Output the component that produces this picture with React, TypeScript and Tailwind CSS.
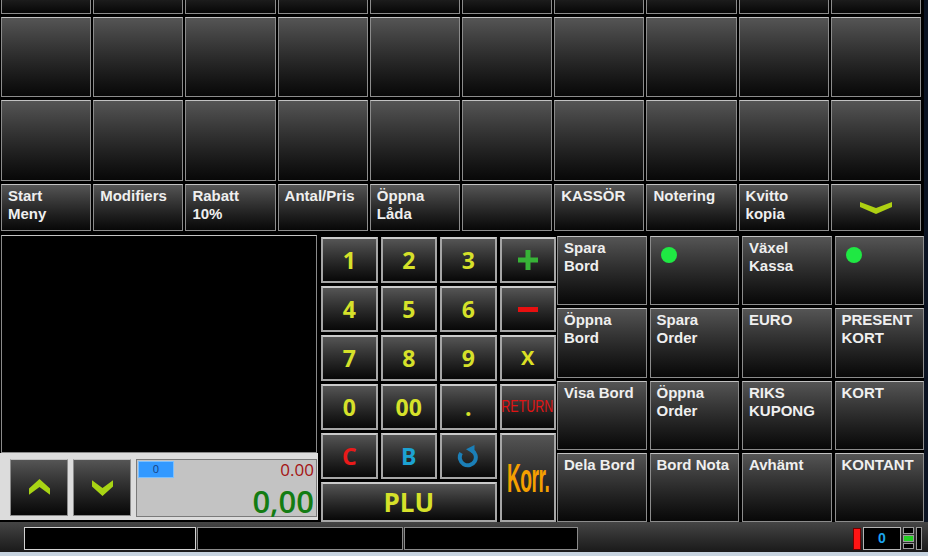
import type { ReactNode } from "react";

const btn =
  "bg-linear-to-b from-[#555555] to-[#080808] border border-[#8c8c8c] border-t-[#c2c2c2]";
const key =
  "bg-linear-to-b from-[#555555] to-[#080808] border-2 border-[#a6a6a6] border-t-[#cacaca] flex items-center justify-center";
const digit = "font-['Open_Sans',sans-serif] font-bold text-[23px] text-[#d6e12a]";

const ChevronDown = ({ w = 32, h = 12 }: { w?: number; h?: number }) => (
  <svg width={w} height={h} viewBox="0 0 32 12">
    <polygon points="0,0 16,6 32,0 32,5 16,12 0,5" fill="#aed012" />
  </svg>
);

const ChevUp = () => (
  <svg width="21" height="17" viewBox="0 0 20 16">
    <polygon points="10,0 20,9 20,15 10,7.5 0,15 0,9" fill="#a8d414" />
  </svg>
);

const ChevDown = () => (
  <svg width="21" height="17" viewBox="0 0 20 16">
    <polygon points="0,1 10,8.5 20,1 20,7 10,16 0,7" fill="#a8d414" />
  </svg>
);

const Label = ({ lines }: { lines: string[] }) => (
  <div className="px-[6px] text-[15px] font-bold leading-[18px] text-[#efefef]">
    {lines.map((l) => (
      <div key={l}>{l}</div>
    ))}
  </div>
);

const topLabels: (string[] | "chev")[] = [
  ["Start", "Meny"],
  ["Modifiers"],
  ["Rabatt", "10%"],
  ["Antal/Pris"],
  ["Öppna", "Låda"],
  [],
  ["KASSÖR"],
  ["Notering"],
  ["Kvitto", "kopia"],
  "chev",
];

const rightCells: (string[] | "dot")[] = [
  ["Spara", "Bord"],
  "dot",
  ["Växel", "Kassa"],
  "dot",
  ["Öppna", "Bord"],
  ["Spara", "Order"],
  ["EURO"],
  ["PRESENT", "KORT"],
  ["Visa Bord"],
  ["Öppna", "Order"],
  ["RIKS", "KUPONG"],
  ["KORT"],
  ["Dela Bord"],
  ["Bord Nota"],
  ["Avhämt"],
  ["KONTANT"],
];

const Refresh = () => (
  <svg width="24" height="24" viewBox="0 0 24 24">
    <path d="M5.07 9 A8 8 0 1 0 15.5 6.2" fill="none" stroke="#1b7fb7" strokeWidth="4" />
    <polygon points="10,5.2 18.5,1 18.5,10.5" fill="#1b7fb7" />
  </svg>
);

const Key = ({ children, className = "" }: { children: ReactNode; className?: string }) => (
  <div className={`${key} ${className}`}>{children}</div>
);

export default function App() {
  return (
    <div className="w-[928px] h-[556px] bg-black flex flex-col overflow-hidden font-['Liberation_Sans',Arial,sans-serif]">
      <div className="flex h-[522px]">
        <div className="w-[924px] flex flex-col">
          {/* product grid + function row */}
          <div className="w-[922px] grid grid-cols-10 grid-rows-[14px_80px_81px_47px] gap-x-[2px] gap-y-[3px] px-[1px]">
            {Array.from({ length: 10 }).map((_, i) => (
              <div
                key={`a${i}`}
                className="bg-linear-to-b from-[#1c1c1c] to-[#070707] border border-t-0 border-[#8c8c8c]"
              />
            ))}
            {Array.from({ length: 20 }).map((_, i) => (
              <div key={`b${i}`} className={btn} />
            ))}
            {topLabels.map((l, i) =>
              l === "chev" ? (
                <div key={`f${i}`} className={`${btn} flex items-center justify-center`}>
                  <ChevronDown />
                </div>
              ) : (
                <div key={`f${i}`} className={`${btn} pt-[2px]`}>
                  <Label lines={l} />
                </div>
              )
            )}
          </div>

          <div className="flex mt-[4px] h-[287px]">
            {/* receipt display + totals */}
            <div className="w-[319px] flex flex-col">
              <div className="ml-[1px] w-[316px] h-[218px] bg-black border border-[#8a8a8a] border-t-[#c4c4c4]" />
              <div className="w-[318px] h-[67px] bg-[#dcdcdc] pl-[10px] pt-[6px] flex gap-[5px] items-start">
                <div className={`${btn} w-[58px] h-[57px] flex items-center justify-center`}>
                  <ChevUp />
                </div>
                <div className={`${btn} w-[58px] h-[57px] flex items-center justify-center`}>
                  <ChevDown />
                </div>
                <div className="w-[181px] h-[58px] bg-[#c3c3c3] border border-[#7a7a7a] flex flex-col font-['Open_Sans',sans-serif]">
                  <div className="flex justify-between items-start h-[18px] mt-[1px]">
                    <div className="ml-[1px] w-[36px] h-[17px] bg-[#3399ff] border border-[#7cc0ff] text-[11px] leading-[14px] text-center text-[#17407f]">
                      0
                    </div>
                    <div className="mr-[2px] text-[17px] leading-[17px] text-[#a31212]">0.00</div>
                  </div>
                  <div className="mt-[9px] mr-[2px] text-right text-[31px] leading-[26px] font-semibold text-[#137c13]">
                    0,00
                  </div>
                </div>
              </div>
            </div>

            {/* keypad */}
            <div className="ml-[2px] mt-[2px] w-[235px] h-[284px] grid grid-cols-4 grid-rows-[46px_46px_46px_46px_46px_40px] gap-[3px]">
              {["1", "2", "3"].map((d) => (
                <Key key={d}><span className={digit}>{d}</span></Key>
              ))}
              <Key>
                <svg width="20" height="20" viewBox="0 0 20 20">
                  <rect x="7.5" y="0" width="5" height="20" fill="#37b337" />
                  <rect x="0" y="7.5" width="20" height="5" fill="#37b337" />
                </svg>
              </Key>
              {["4", "5", "6"].map((d) => (
                <Key key={d}><span className={digit}>{d}</span></Key>
              ))}
              <Key>
                <div className="w-[20px] h-[5px] bg-[#e81010]" />
              </Key>
              {["7", "8", "9"].map((d) => (
                <Key key={d}><span className={digit}>{d}</span></Key>
              ))}
              <Key><span className="font-['Open_Sans',sans-serif] font-bold text-[20px] text-[#dde024]">X</span></Key>
              {["0", "00", "."].map((d) => (
                <Key key={d}><span className={digit}>{d}</span></Key>
              ))}
              <Key>
                <span className="text-[16px] text-[#e01414] scale-x-[0.78] inline-block">RETURN</span>
              </Key>
              <Key><span className="font-['Open_Sans',sans-serif] font-bold text-[23px] text-[#ea1a1a]">C</span></Key>
              <Key><span className="font-['Open_Sans',sans-serif] font-bold text-[23px] text-[#1ca2d2]">B</span></Key>
              <Key><Refresh /></Key>
              <Key className="row-span-2">
                <span className="font-bold text-[40px] tracking-[-1px] text-[#f5a000] scale-x-[0.48] inline-block">Korr.</span>
              </Key>
              <Key className="col-span-3">
                <span className="font-['Open_Sans',sans-serif] font-bold text-[26px] text-[#d6e12a]">PLU</span>
              </Key>
            </div>

            {/* payment buttons */}
            <div className="ml-[1px] mt-[1px] w-[367px] h-[286px] grid grid-cols-4 grid-rows-4 gap-[3px]">
              {rightCells.map((c, i) =>
                c === "dot" ? (
                  <div key={i} className={btn}>
                    <div className="ml-[10px] mt-[10px] w-[16px] h-[16px] rounded-full bg-[#1fe843]" />
                  </div>
                ) : (
                  <div key={i} className={`${btn} pt-[2px]`}>
                    <Label lines={c} />
                  </div>
                )
              )}
            </div>
          </div>
        </div>
        <div className="flex-1 bg-[#0b1322]" />
      </div>

      {/* status bar */}
      <div className="h-[30px] bg-linear-to-b from-[#454545] to-[#1a1a1a] flex items-start pt-[5px] pr-[6px]">
        <div className="ml-[24px] w-[172px] h-[23px] bg-black border border-[#d2d2d2]" />
        <div className="ml-[1px] w-[206px] h-[23px] bg-black border border-[#8a8a8a]" />
        <div className="ml-[1px] w-[174px] h-[23px] bg-black border border-[#8a8a8a]" />
        <div className="flex-1" />
        <div className="mt-[1px] w-[8px] h-[22px] bg-[#ff1414] border border-[#700000]" />
        <div className="ml-[2px] w-[38px] h-[23px] bg-black border border-[#b4b4b4] flex items-center justify-center text-[14px] font-bold text-[#1ca4ee]">
          0
        </div>
        <div className="ml-[2px] w-[11px] h-[23px] flex flex-col gap-[1px]">
          <div className="h-[7px] bg-black border border-[#9a9a9a]" />
          <div className="h-[7px] bg-[#22d022] border border-[#9a9a9a]" />
          <div className="h-[6px] bg-black border border-[#9a9a9a]" />
        </div>
        <div className="ml-[2px] w-[6px] h-[23px] bg-black border border-[#9a9a9a]" />
      </div>
      <div className="flex-1 bg-[#c6d3df]" />
    </div>
  );
}
